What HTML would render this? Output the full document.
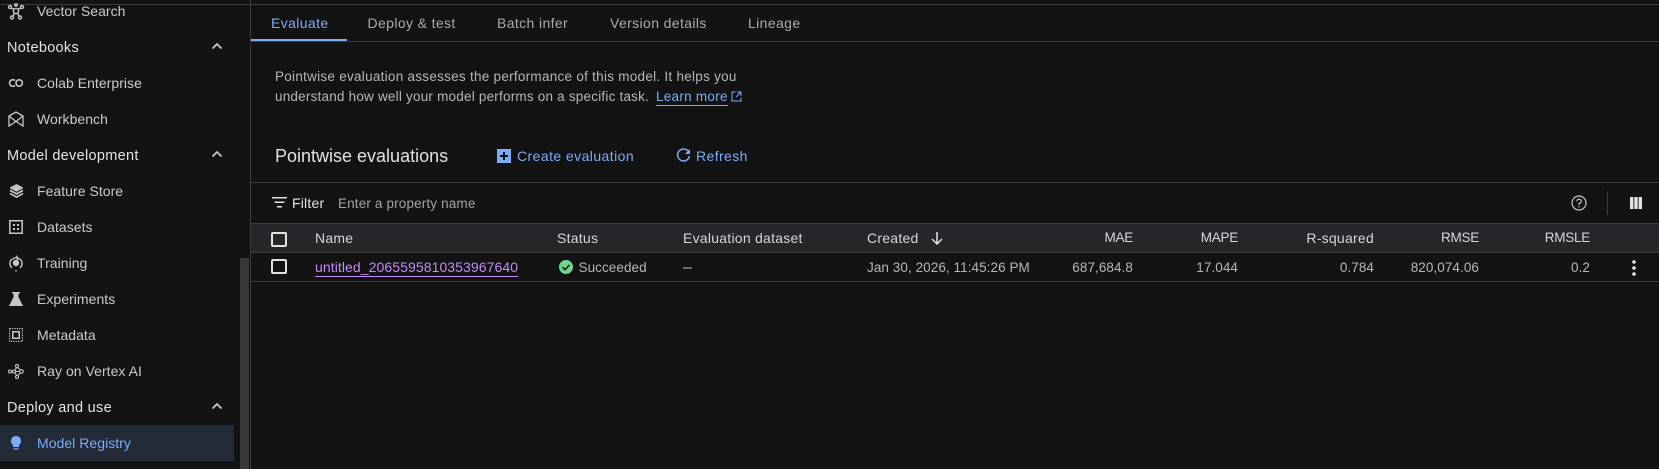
<!DOCTYPE html>
<html><head><meta charset="utf-8"><style>
html,body{margin:0;padding:0;width:1659px;height:469px;overflow:hidden;background:#131314;font-family:"Liberation Sans",sans-serif;}
.t{position:absolute;white-space:nowrap;line-height:20px;font-size:14px;color:#c4c7c5;letter-spacing:.25px}
.r{text-align:right}
.s{color:#e3e3e3;font-size:14.5px;left:7px;letter-spacing:.3px}
.n{left:37px;color:#c9cbd0;font-size:14px;letter-spacing:.04px}
.l{position:absolute;background:#3c3d3f}
svg{position:absolute;overflow:visible}
.tab{color:#a8abaf;top:13px;font-size:14px;letter-spacing:.38px}
.h{color:#d5d7da;top:228px}
.c{font-size:13.5px;letter-spacing:-.25px}
.d{color:#b4b7ba;top:258px;font-size:13.5px;letter-spacing:.07px}
</style></head><body>
<div class="l" style="left:0;top:4px;width:1659px;height:1px"></div>
<div class="l" style="left:250px;top:0;width:1px;height:469px"></div>
<div class="l" style="left:240px;top:258px;width:9px;height:211px;background:#36373a"></div>
<div style="position:absolute;left:0;top:425px;width:234px;height:36px;background:#232a38"></div>

<svg style="left:7px;top:2px" width="18" height="18" viewBox="0 0 18 18" fill="none" stroke="#c4c7c5" stroke-width="1.4"><circle cx="9" cy="9" r="2.6"/><circle cx="3" cy="5" r="1.5"/><circle cx="15" cy="5" r="1.5"/><circle cx="5" cy="15.5" r="1.5"/><circle cx="13" cy="15.5" r="1.5"/><circle cx="9" cy="3" r="1.2"/><path d="M4.500 6l2.500 1.500M13.500 6L11 7.500M6 14l1.500-3M12 14l-1.500-3"/></svg>
<div class="t n" style="top:1px">Vector Search</div>
<div class="t s" style="top:38px">Notebooks</div>
<svg style="left:211px;top:42px" width="12" height="8" viewBox="0 0 12 8" fill="none" stroke="#c4c7c5" stroke-width="1.8"><path d="M1.500 6.500L6 2l4.500 4.500"/></svg>
<svg style="left:8px;top:77px" width="16" height="12" viewBox="0 0 16 12" fill="none" stroke="#c4c7c5" stroke-width="1.600"><path d="M7 3.500A3.300 3.300 0 1 0 7 8.500"/><circle cx="11.200" cy="6" r="3.200"/></svg>
<div class="t n" style="top:73px">Colab Enterprise</div>
<svg style="left:8px;top:111px" width="16" height="16" viewBox="0 0 16 16" fill="none" stroke="#c4c7c5" stroke-width="1.300"><path d="M1 5L8 1l7 4v10L8 10.500 1 15zM1 5l7 5.500L15 5"/></svg>
<div class="t n" style="top:109px">Workbench</div>
<div class="t s" style="top:146px">Model development</div>
<svg style="left:211px;top:150px" width="12" height="8" viewBox="0 0 12 8" fill="none" stroke="#c4c7c5" stroke-width="1.8"><path d="M1.500 6.500L6 2l4.500 4.500"/></svg>
<svg style="left:10px;top:184px" width="13" height="14" viewBox="0 0 13 14"><path fill="#c4c7c5" d="M6.500 0L13 3.500v7L6.500 14 0 10.500v-7z"/><path fill="none" stroke="#131314" stroke-width="1" d="M0 4.800l6.500 3.500L13 4.800M0 8l6.500 3.500L13 8"/></svg>
<div class="t n" style="top:181px">Feature Store</div>
<svg style="left:9px;top:220px" width="14" height="14" viewBox="0 0 14 14"><path fill="none" stroke="#c4c7c5" stroke-width="1.500" d="M.8.800h12.400v12.400H.8z"/><path fill="#c4c7c5" d="M4 4h2v2H4zM8 4h2v2H8zM4 8h2v2H4zM8 8h2v2H8z"/></svg>
<div class="t n" style="top:217px">Datasets</div>
<svg style="left:9px;top:254px" width="14" height="18" viewBox="0 0 14 18" fill="none" stroke="#c4c7c5" stroke-width="1.400"><path d="M3 14A6 6 0 0 1 3 5M11 5a6 6 0 0 1 0 9M3.500 5.500C5 3.500 8 3 9.500 4"/><path d="M8 1.500v3.500h3" stroke-width="1.200"/><circle cx="7" cy="9" r="2.500" fill="#c4c7c5"/><path d="M7 16v1.500"/></svg>
<div class="t n" style="top:253px">Training</div>
<svg style="left:9px;top:292px" width="14" height="14" viewBox="0 0 14 14"><path fill="#c4c7c5" d="M3 0h8v1.500H9.500v3.500L14 14H0l4.500-9V1.500H3z"/></svg>
<div class="t n" style="top:289px">Experiments</div>
<svg style="left:9px;top:328px" width="14" height="14" viewBox="0 0 14 14"><path fill="none" stroke="#c4c7c5" stroke-width="1.200" stroke-dasharray="1.200 1.200" d="M.6.600h12.800v12.800H.6z"/><path fill="none" stroke="#c4c7c5" stroke-width="1.500" d="M3.800 3.800h6.400v6.400H3.800z"/></svg>
<div class="t n" style="top:325px">Metadata</div>
<svg style="left:8px;top:364px" width="16" height="15" viewBox="0 0 16 15" fill="none" stroke="#c4c7c5" stroke-width="1.100"><circle cx="2" cy="7.500" r="1.500"/><circle cx="6" cy="7.500" r="1.500"/><circle cx="9" cy="2" r="1.500"/><circle cx="9" cy="13" r="1.500"/><circle cx="13.500" cy="7.500" r="1.800"/><path d="M7.500 7.500h4.200M9.500 3.500l3 2.500M9.500 11.500l3-2.500M7 6.500L8.500 3.500M7 8.500l1.500 3"/></svg>
<div class="t n" style="top:361px">Ray on Vertex AI</div>
<div class="t s" style="top:398px">Deploy and use</div>
<svg style="left:211px;top:402px" width="12" height="8" viewBox="0 0 12 8" fill="none" stroke="#c4c7c5" stroke-width="1.8"><path d="M1.500 6.500L6 2l4.500 4.500"/></svg>
<svg style="left:11px;top:436px" width="10" height="15" viewBox="0 0 10 15"><path fill="#7cacf8" d="M5 0a5 5 0 0 1 3 9v2H2V9a5 5 0 0 1 3-9zM2.500 12.200h5v1.300h-5z"/></svg>
<div class="t n" style="top:433px;color:#7cacf8">Model Registry</div>

<div class="t tab" style="left:271px;color:#7cacf8">Evaluate</div>
<div class="t tab" style="left:367.500px">Deploy &amp; test</div>
<div class="t tab" style="left:497px">Batch infer</div>
<div class="t tab" style="left:610px">Version details</div>
<div class="t tab" style="left:748px">Lineage</div>
<div class="l" style="left:251px;top:41px;width:1408px;height:1px"></div>
<div style="position:absolute;left:251px;top:39px;width:96px;height:2px;background:#7cacf8"></div>

<div class="t" style="left:275px;top:67px;color:#b4b7ba;font-size:13.500px;letter-spacing:.27px">Pointwise evaluation assesses the performance of this model. It helps you</div>
<div class="t" style="left:275px;top:87px;color:#b4b7ba;font-size:13.500px;letter-spacing:.21px">understand how well your model performs on a specific task.</div>
<div class="t" style="left:656px;top:88px;color:#7cacf8;font-size:13.500px;letter-spacing:.27px;border-bottom:1px solid #7cacf8;line-height:17px">Learn more</div>
<svg style="left:731px;top:91px" width="11" height="11" viewBox="0 0 11 11" fill="none" stroke="#7cacf8" stroke-width="1"><path d="M4.500 1H1v9h9V6.500M6 1h4v4M10 1L5 6"/></svg>

<div class="t" style="left:275px;top:145px;font-size:18px;line-height:22px;color:#dfe1e3;letter-spacing:0">Pointwise evaluations</div>
<svg style="left:497px;top:149px" width="14" height="14" viewBox="0 0 14 14"><path fill="#7cacf8" d="M0 0h14v14H0z"/><path fill="#131314" d="M6 3h2v3h3v2H8v3H6V8H3V6h3z"/></svg>
<div class="t" style="left:517px;top:146px;color:#7cacf8;letter-spacing:.43px">Create evaluation</div>
<svg style="left:676px;top:148px" width="15" height="15" viewBox="0 0 15 15" fill="none" stroke="#7cacf8" stroke-width="1.500"><path d="M12.500 3.500A6 6 0 1 0 13.500 8"/><path fill="#7cacf8" stroke="none" d="M14 1v5H9z"/></svg>
<div class="t" style="left:696px;top:146px;color:#7cacf8;letter-spacing:.4px">Refresh</div>
<div class="l" style="left:251px;top:182px;width:1408px;height:1px"></div>

<svg style="left:272px;top:197px" width="15" height="11" viewBox="0 0 15 11" fill="#dfe1e3"><path d="M0 0h15v1.500H0zM2.500 4.500h10V6h-10zM5 9h5v1.500H5z"/></svg>
<div class="t" style="left:292px;top:193px;color:#e3e3e3;letter-spacing:.2px">Filter</div>
<div class="t" style="left:338px;top:194px;color:#a0a3a6;font-size:13.500px;letter-spacing:.15px">Enter a property name</div>
<svg style="left:1571px;top:195px" width="16" height="16" viewBox="0 0 16 16" fill="none" stroke="#c4c7c5" stroke-width="1.200"><circle cx="8" cy="8" r="7"/><path d="M5.800 6.300A2.200 2.200 0 1 1 8 8.500v1.200"/><path d="M8 11v1.300"/></svg>
<div class="l" style="left:1607px;top:191px;width:1px;height:24px"></div>
<svg style="left:1630px;top:197px" width="12" height="12" viewBox="0 0 12 12" fill="#dfe1e3"><path d="M0 0h3.400v12H0zM4.300 0h3.400v12H4.300zM8.600 0H12v12H8.600z"/></svg>

<div style="position:absolute;left:251px;top:223px;width:1408px;background:#26272b;border-top:1px solid #3c3d3f;border-bottom:1px solid #3c3d3f;box-sizing:border-box;height:30px"></div>
<div class="l" style="left:251px;top:281px;width:1408px;height:1px"></div>
<div style="position:absolute;left:271px;top:232px;width:12px;height:11px;border:2px solid #e3e3e3;border-radius:2px"></div>
<div style="position:absolute;left:271px;top:259px;width:12px;height:11px;border:2px solid #e3e3e3;border-radius:2px"></div>

<div class="t h" style="left:315px">Name</div>
<div class="t h" style="left:557px">Status</div>
<div class="t h" style="left:683px">Evaluation dataset</div>
<div class="t h" style="left:867px">Created</div>
<svg style="left:930px;top:231px" width="14" height="14" viewBox="0 0 14 14" fill="none" stroke="#e3e3e3" stroke-width="1.500"><path d="M7 1v12M2 8l5 5 5-5"/></svg>
<div class="t h r c" style="right:526px">MAE</div>
<div class="t h r c" style="right:421px">MAPE</div>
<div class="t h r" style="right:285px">R-squared</div>
<div class="t h r c" style="right:180px">RMSE</div>
<div class="t h r c" style="right:69px">RMSLE</div>

<div class="t" style="left:315px;top:258px;color:#c58af9;letter-spacing:.08px;line-height:18px;border-bottom:1px solid #c58af9">untitled_2065595810353967640</div>
<svg style="left:559px;top:260px" width="14" height="14" viewBox="0 0 14 14"><circle cx="7" cy="7" r="7" fill="#6dd58c"/><path d="M3.500 7.200L6 9.700l4.500-4.700" fill="none" stroke="#131314" stroke-width="1.500"/></svg>
<div class="t d" style="left:578.500px">Succeeded</div>
<div class="t d" style="left:683px;font-size:16px">–</div>
<div class="t d" style="left:867px">Jan 30, 2026, 11:45:26 PM</div>
<div class="t d r" style="right:526px">687,684.8</div>
<div class="t d r" style="right:421px">17.044</div>
<div class="t d r" style="right:285px">0.784</div>
<div class="t d r" style="right:180px">820,074.06</div>
<div class="t d r" style="right:69px">0.2</div>
<svg style="left:1632px;top:260px" width="4" height="16" viewBox="0 0 4 16" fill="#dfe1e3"><circle cx="2" cy="2" r="1.800"/><circle cx="2" cy="8" r="1.800"/><circle cx="2" cy="14" r="1.800"/></svg>
</body></html>
